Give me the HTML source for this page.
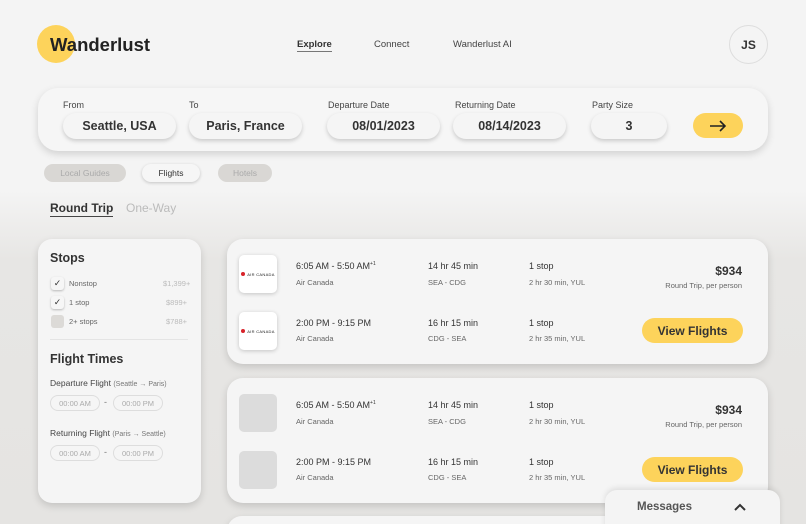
<!DOCTYPE html>
<html><head><meta charset="utf-8"><style>
*{margin:0;padding:0;box-sizing:border-box}
html,body{width:806px;height:524px;overflow:hidden}
body{position:relative;font-family:"Liberation Sans",sans-serif;color:#333;background:linear-gradient(#f4f4f4 0,#f4f4f4 190px,#e7e6e4 260px,#e5e4e2 524px)}
.a{position:absolute;white-space:nowrap}
.pill{position:absolute;background:#f5f5f5;border-radius:14px;box-shadow:0 2px 4px rgba(0,0,0,.18);font-size:12.5px;font-weight:bold;color:#333;display:flex;align-items:center;justify-content:center}
.lbl{position:absolute;font-size:9px;color:#444}
.card{position:absolute;background:#f5f5f5;border-radius:16px;box-shadow:0 3px 8px rgba(0,0,0,.15)}
.s9{font-size:9px;color:#555}
.s7{font-size:7.5px;color:#666}
.logo{position:absolute;width:38px;height:38px;border-radius:5px;background:#fff;box-shadow:0 1px 4px rgba(0,0,0,.2);display:flex;align-items:center;justify-content:center;font-size:4px;color:#222;letter-spacing:.3px}
.logo b{display:inline-block;width:4px;height:4px;border-radius:50%;background:#d8232a;margin-right:2px}
.gray{position:absolute;width:38px;height:38px;border-radius:5px;background:#dcdcdc}
.vf{position:absolute;background:#fdd35b;border-radius:13px;font-size:12px;font-weight:bold;color:#333;display:flex;align-items:center;justify-content:center}
.cb{position:absolute;width:13px;height:13px;border-radius:3px;background:#f6f6f6;box-shadow:0 1px 2px rgba(0,0,0,.25);font-size:9px;line-height:13px;text-align:center}
.tp{position:absolute;height:16px;border:1px solid #ddd;border-radius:8px;font-size:7.5px;color:#aaa;display:flex;align-items:center;justify-content:center}
</style></head><body>
<div class="a" style="left:37px;top:25px;width:38px;height:38px;border-radius:50%;background:#fdd35b"></div>
<div class="a" style="left:50px;top:34px;font-size:18.5px;font-weight:bold;color:#222">Wanderlust</div>
<div class="a" style="left:297px;top:39px;font-size:9.5px;font-weight:bold;color:#333;border-bottom:1.5px solid #777;padding-bottom:1px">Explore</div>
<div class="a" style="left:374px;top:39px;font-size:9.5px;color:#444">Connect</div>
<div class="a" style="left:453px;top:39px;font-size:9.5px;color:#444">Wanderlust AI</div>
<div class="a" style="left:729px;top:25px;width:39px;height:39px;border-radius:50%;border:1px solid #ddd;font-size:12px;font-weight:bold;display:flex;align-items:center;justify-content:center">JS</div>

<div class="card" style="left:38px;top:88px;width:730px;height:63px;border-radius:20px;background:#f6f6f6"></div>
<div class="lbl" style="left:63px;top:100px">From</div>
<div class="lbl" style="left:189px;top:100px">To</div>
<div class="lbl" style="left:328px;top:100px">Departure Date</div>
<div class="lbl" style="left:455px;top:100px">Returning Date</div>
<div class="lbl" style="left:592px;top:100px">Party Size</div>
<div class="pill" style="left:63px;top:113px;width:113px;height:26px">Seattle, USA</div>
<div class="pill" style="left:189px;top:113px;width:113px;height:26px">Paris, France</div>
<div class="pill" style="left:327px;top:113px;width:113px;height:26px">08/01/2023</div>
<div class="pill" style="left:453px;top:113px;width:113px;height:26px">08/14/2023</div>
<div class="pill" style="left:591px;top:113px;width:76px;height:26px">3</div>
<div class="a" style="left:693px;top:113px;width:50px;height:25px;border-radius:13px;background:#fdd35b;display:flex;align-items:center;justify-content:center"><svg width="18" height="12" viewBox="0 0 18 12"><path d="M1 6H16M11 1L16 6L11 11" fill="none" stroke="#222" stroke-width="1.6"/></svg></div>

<div class="a" style="left:44px;top:164px;width:82px;height:18px;border-radius:9px;background:#d9d7d4;font-size:8.5px;color:#aaa;display:flex;align-items:center;justify-content:center">Local Guides</div>
<div class="a" style="left:142px;top:164px;width:58px;height:18px;border-radius:9px;background:#f6f6f6;box-shadow:0 1px 3px rgba(0,0,0,.2);font-size:8.5px;color:#333;display:flex;align-items:center;justify-content:center">Flights</div>
<div class="a" style="left:218px;top:164px;width:54px;height:18px;border-radius:9px;background:#d9d7d4;font-size:8.5px;color:#aaa;display:flex;align-items:center;justify-content:center">Hotels</div>
<div class="a" style="left:50px;top:201px;font-size:12px;font-weight:bold;color:#333;border-bottom:1.5px solid #444;padding-bottom:1px">Round Trip</div>
<div class="a" style="left:126px;top:201px;font-size:12px;color:#bbb">One-Way</div>

<div class="card" style="left:38px;top:239px;width:163px;height:264px;border-radius:14px"></div>
<div class="a" style="left:50px;top:251px;font-size:12.5px;font-weight:bold;color:#333">Stops</div>
<div class="cb" style="left:51px;top:277px">✓</div><div class="a s7" style="left:69px;top:279px">Nonstop</div><div class="a s7" style="left:163px;top:279px;color:#bbb">$1,399+</div>
<div class="cb" style="left:51px;top:296px">✓</div><div class="a s7" style="left:69px;top:298px">1 stop</div><div class="a s7" style="left:166px;top:298px;color:#bbb">$899+</div>
<div class="cb" style="left:51px;top:315px;background:#dcdad7;box-shadow:none"></div><div class="a s7" style="left:69px;top:317px">2+ stops</div><div class="a s7" style="left:166px;top:317px;color:#bbb">$788+</div>
<div class="a" style="left:50px;top:339px;width:138px;height:1px;background:#e4e4e4"></div>
<div class="a" style="left:50px;top:352px;font-size:12.5px;font-weight:bold;color:#333">Flight Times</div>
<div class="a" style="left:50px;top:378px;font-size:8.5px;color:#444">Departure Flight <span style="font-size:7px;color:#777">(Seattle → Paris)</span></div>
<div class="tp" style="left:50px;top:395px;width:50px">00:00 AM</div><div class="a" style="left:104px;top:397px;font-size:9px;color:#777">-</div><div class="tp" style="left:113px;top:395px;width:50px">00:00 PM</div>
<div class="a" style="left:50px;top:428px;font-size:8.5px;color:#444">Returning Flight <span style="font-size:7px;color:#777">(Paris → Seattle)</span></div>
<div class="tp" style="left:50px;top:445px;width:50px">00:00 AM</div><div class="a" style="left:104px;top:447px;font-size:9px;color:#777">-</div><div class="tp" style="left:113px;top:445px;width:50px">00:00 PM</div>

<div class="card" style="left:227px;top:239px;width:541px;height:125px"></div>
<div class="logo" style="left:239px;top:255px"><b></b>AIR CANADA</div>
<div class="logo" style="left:239px;top:312px"><b></b>AIR CANADA</div>
<div class="a s9" style="left:296px;top:261px;color:#333">6:05 AM - 5:50 AM<sup style="font-size:5px">+1</sup></div><div class="a s7" style="left:296px;top:278px">Air Canada</div>
<div class="a s9" style="left:428px;top:261px;color:#333">14 hr 45 min</div><div class="a s7" style="left:428px;top:278px">SEA - CDG</div>
<div class="a s9" style="left:529px;top:261px;color:#333">1 stop</div><div class="a s7" style="left:529px;top:278px">2 hr 30 min, YUL</div>
<div class="a" style="right:64px;top:264px;font-size:12px;font-weight:bold;color:#333">$934</div>
<div class="a s7" style="right:64px;top:281px">Round Trip, per person</div>
<div class="a s9" style="left:296px;top:318px;color:#333">2:00 PM - 9:15 PM</div><div class="a s7" style="left:296px;top:334px">Air Canada</div>
<div class="a s9" style="left:428px;top:318px;color:#333">16 hr 15 min</div><div class="a s7" style="left:428px;top:334px">CDG - SEA</div>
<div class="a s9" style="left:529px;top:318px;color:#333">1 stop</div><div class="a s7" style="left:529px;top:334px">2 hr 35 min, YUL</div>
<div class="vf" style="left:642px;top:318px;width:101px;height:25px">View Flights</div>

<div class="card" style="left:227px;top:378px;width:541px;height:125px"></div>
<div class="gray" style="left:239px;top:394px"></div>
<div class="gray" style="left:239px;top:451px"></div>
<div class="a s9" style="left:296px;top:400px;color:#333">6:05 AM - 5:50 AM<sup style="font-size:5px">+1</sup></div><div class="a s7" style="left:296px;top:417px">Air Canada</div>
<div class="a s9" style="left:428px;top:400px;color:#333">14 hr 45 min</div><div class="a s7" style="left:428px;top:417px">SEA - CDG</div>
<div class="a s9" style="left:529px;top:400px;color:#333">1 stop</div><div class="a s7" style="left:529px;top:417px">2 hr 30 min, YUL</div>
<div class="a" style="right:64px;top:403px;font-size:12px;font-weight:bold;color:#333">$934</div>
<div class="a s7" style="right:64px;top:420px">Round Trip, per person</div>
<div class="a s9" style="left:296px;top:457px;color:#333">2:00 PM - 9:15 PM</div><div class="a s7" style="left:296px;top:473px">Air Canada</div>
<div class="a s9" style="left:428px;top:457px;color:#333">16 hr 15 min</div><div class="a s7" style="left:428px;top:473px">CDG - SEA</div>
<div class="a s9" style="left:529px;top:457px;color:#333">1 stop</div><div class="a s7" style="left:529px;top:473px">2 hr 35 min, YUL</div>
<div class="vf" style="left:642px;top:457px;width:101px;height:25px">View Flights</div>

<div class="card" style="left:227px;top:516px;width:541px;height:30px"></div>
<div class="a" style="left:605px;top:490px;width:175px;height:50px;border-radius:12px;background:#f4f4f4;box-shadow:0 -2px 6px rgba(0,0,0,.1)"></div>
<div class="a" style="left:637px;top:501px;font-size:11.5px;font-weight:bold;color:#555">Messages</div>
<svg class="a" style="left:734px;top:503px" width="12" height="8" viewBox="0 0 12 8"><path d="M1 7L6 2L11 7" fill="none" stroke="#333" stroke-width="2"/></svg>
</body></html>
